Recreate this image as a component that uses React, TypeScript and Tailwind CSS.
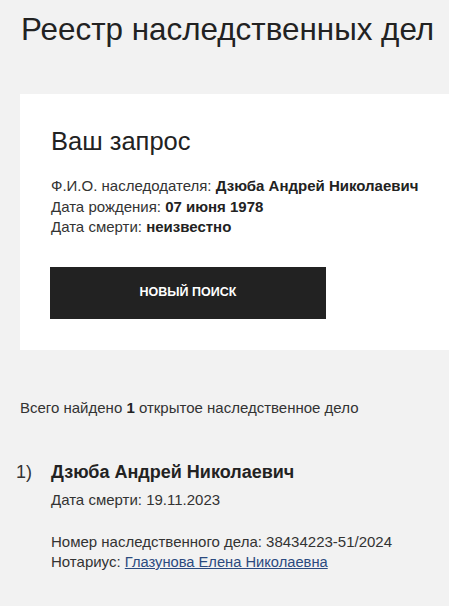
export default function App() {
  return (
    <div
      className="min-h-[606px] w-[449px] overflow-hidden bg-[#f2f2f2] text-[#222]"
      style={{ fontFamily: '"Liberation Sans", Arial, sans-serif' }}
    >
      {/* Header */}
      <h1 className="pl-[21px] pt-[12px] text-[31.4px] font-normal leading-[36px] whitespace-nowrap">
        Реестр наследственных дел
      </h1>

      {/* Query card */}
      <div className="ml-[20px] mt-[46px] bg-white pl-[31px] pt-[32px] pb-[31px]">
        <h2 className="text-[25.5px] leading-[30px] font-normal">Ваш запрос</h2>
        <div className="mt-[20px] text-[15px] leading-[20.5px] text-[#333]">
          <p>
            Ф.И.О. наследодателя: <b className="text-[#222]">Дзюба Андрей Николаевич</b>
          </p>
          <p>
            Дата рождения: <b className="text-[#222]">07 июня 1978</b>
          </p>
          <p>
            Дата смерти: <b className="text-[#222]">неизвестно</b>
          </p>
        </div>
        <button className="mt-[29px] flex h-[52px] w-[276px] -ml-px items-center justify-center bg-[#222] text-[12.5px] font-bold uppercase text-white">
          Новый поиск
        </button>
      </div>

      {/* Results */}
      <p className="mt-[48px] pl-[20px] text-[15px] leading-[20px] text-[#333]">
        Всего найдено <b className="text-[#222]">1</b> открытое наследственное дело
      </p>

      <div className="mt-[42px] flex">
        <span className="w-[51px] shrink-0 pl-[16px] text-[18px] leading-[24px] text-[#333]">1)</span>
        <div className="text-[15px] text-[#333]">
          <h3 className="text-[18px] leading-[24px] font-bold text-[#222]">Дзюба Андрей Николаевич</h3>
          <p className="mt-[6px] leading-[20px]">Дата смерти: 19.11.2023</p>
          <p className="mt-[22px] leading-[20.5px]">Номер наследственного дела: 38434223-51/2024</p>
          <p className="leading-[20.5px]">
            Нотариус:{' '}
            <a href="#" className="text-[14.7px] text-[#2b4a7f] underline">
              Глазунова Елена Николаевна
            </a>
          </p>
        </div>
      </div>
    </div>
  );
}
